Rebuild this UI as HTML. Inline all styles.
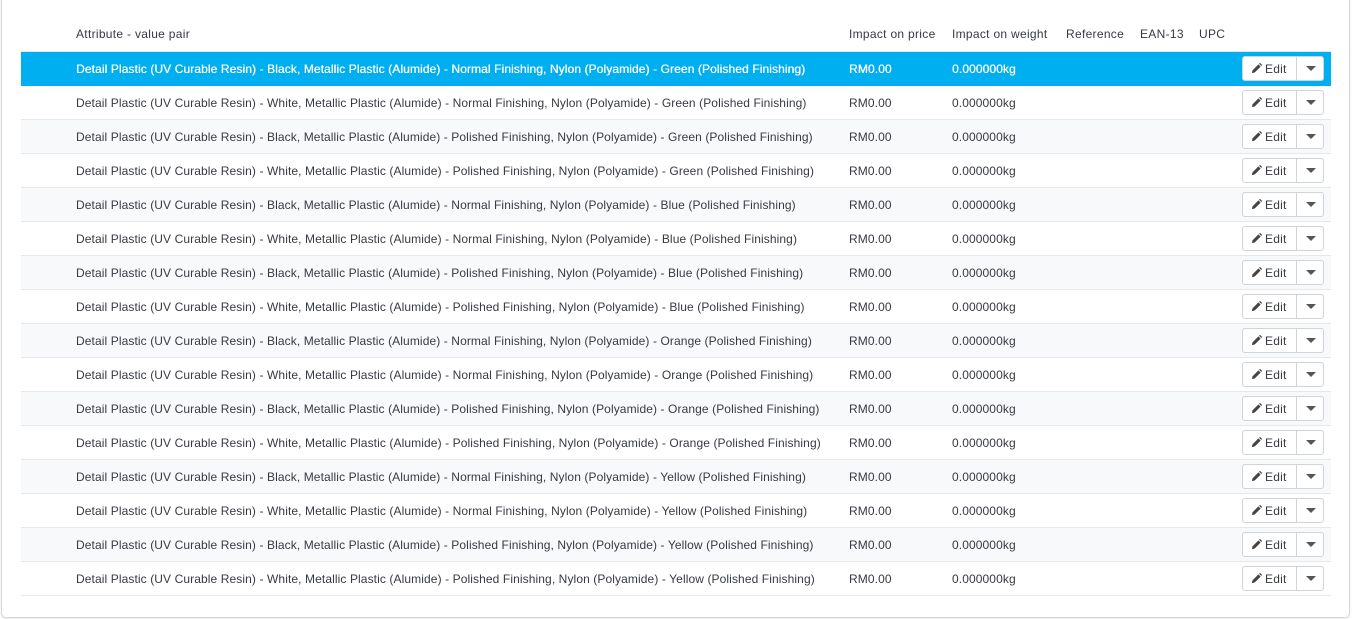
<!DOCTYPE html>
<html><head><style>
body{margin:0;background:#fff;font-family:"Liberation Sans",sans-serif;font-size:12px;color:#363a41;width:1352px;height:619px;overflow:hidden;position:relative}
.panel{position:absolute;left:1px;top:-5px;width:1349px;height:623px;border:1px solid #d3d8db;border-radius:5px;box-sizing:border-box;box-shadow:0 1px 2px rgba(0,0,0,.1)}
.hdr{position:absolute;top:17px;left:21px;width:1310px;height:34px;border-bottom:1px solid #e4e6e9}
.c{position:absolute;white-space:nowrap;line-height:34px;font-size:12px;letter-spacing:0.1px}
.hdr .c{letter-spacing:0.3px}
.row{position:absolute;left:21px;width:1310px;height:33px;border-bottom:1px solid #e6e8eb}
.row.alt{background:#f8f9fb}
.row.sel{background:#00aff0;color:#fff;border-bottom-color:#00aff0;text-shadow:0.3px 0 0 #fff}
.row.sel .c{letter-spacing:0.1px}
.btn{position:absolute;left:1221px;top:4px;width:82px;height:25px;border:1px solid #cfd4d8;border-radius:3px;background:#fff;box-sizing:border-box;color:#363a41;text-shadow:none}
.btn .e{position:absolute;left:8px;top:1px;line-height:22px;font-size:12px;letter-spacing:0.2px}
.btn .s{position:absolute;left:53px;top:0;bottom:0;border-left:1px solid #cfd4d8;width:28px}
.btn .s:after{content:"";position:absolute;left:9px;top:9px;border-left:5px solid transparent;border-right:5px solid transparent;border-top:5px solid #555}
</style></head><body>
<div class="panel"></div>
<div class="hdr">
<span class="c" style="left:55px">Attribute - value pair</span>
<span class="c" style="left:828px">Impact on price</span>
<span class="c" style="left:931px">Impact on weight</span>
<span class="c" style="left:1045px">Reference</span>
<span class="c" style="left:1119px">EAN-13</span>
<span class="c" style="left:1178px">UPC</span>
</div>
<div id="rows"></div>
<script>
var r=[["Black","Normal","Green"],["White","Normal","Green"],["Black","Polished","Green"],["White","Polished","Green"],["Black","Normal","Blue"],["White","Normal","Blue"],["Black","Polished","Blue"],["White","Polished","Blue"],["Black","Normal","Orange"],["White","Normal","Orange"],["Black","Polished","Orange"],["White","Polished","Orange"],["Black","Normal","Yellow"],["White","Normal","Yellow"],["Black","Polished","Yellow"],["White","Polished","Yellow"]];
var h="";
var pen='<svg width="11" height="11" viewBox="0 0 12 12" style="vertical-align:-1px;margin-right:3px"><path d="M1 11l0.6-3 6.5-6.5 2.4 2.4-6.5 6.5z M8.8 0.8l1-1 2.4 2.4-1 1z" fill="#444"/></svg>';
r.forEach(function(a,i){
var cls=i==0?"row sel":(i%2==0?"row alt":"row");
h+='<div class="'+cls+'" style="top:'+(52+i*34)+'px"><span class="c" style="left:55px">Detail Plastic (UV Curable Resin) - '+a[0]+', Metallic Plastic (Alumide) - '+a[1]+' Finishing, Nylon (Polyamide) - '+a[2]+' (Polished Finishing)</span><span class="c" style="left:828px">RM0.00</span><span class="c" style="left:931px">0.000000kg</span><div class="btn"><span class="e">'+pen+'Edit</span><span class="s"></span></div></div>';
});
document.getElementById("rows").innerHTML=h;
</script>
</body></html>
